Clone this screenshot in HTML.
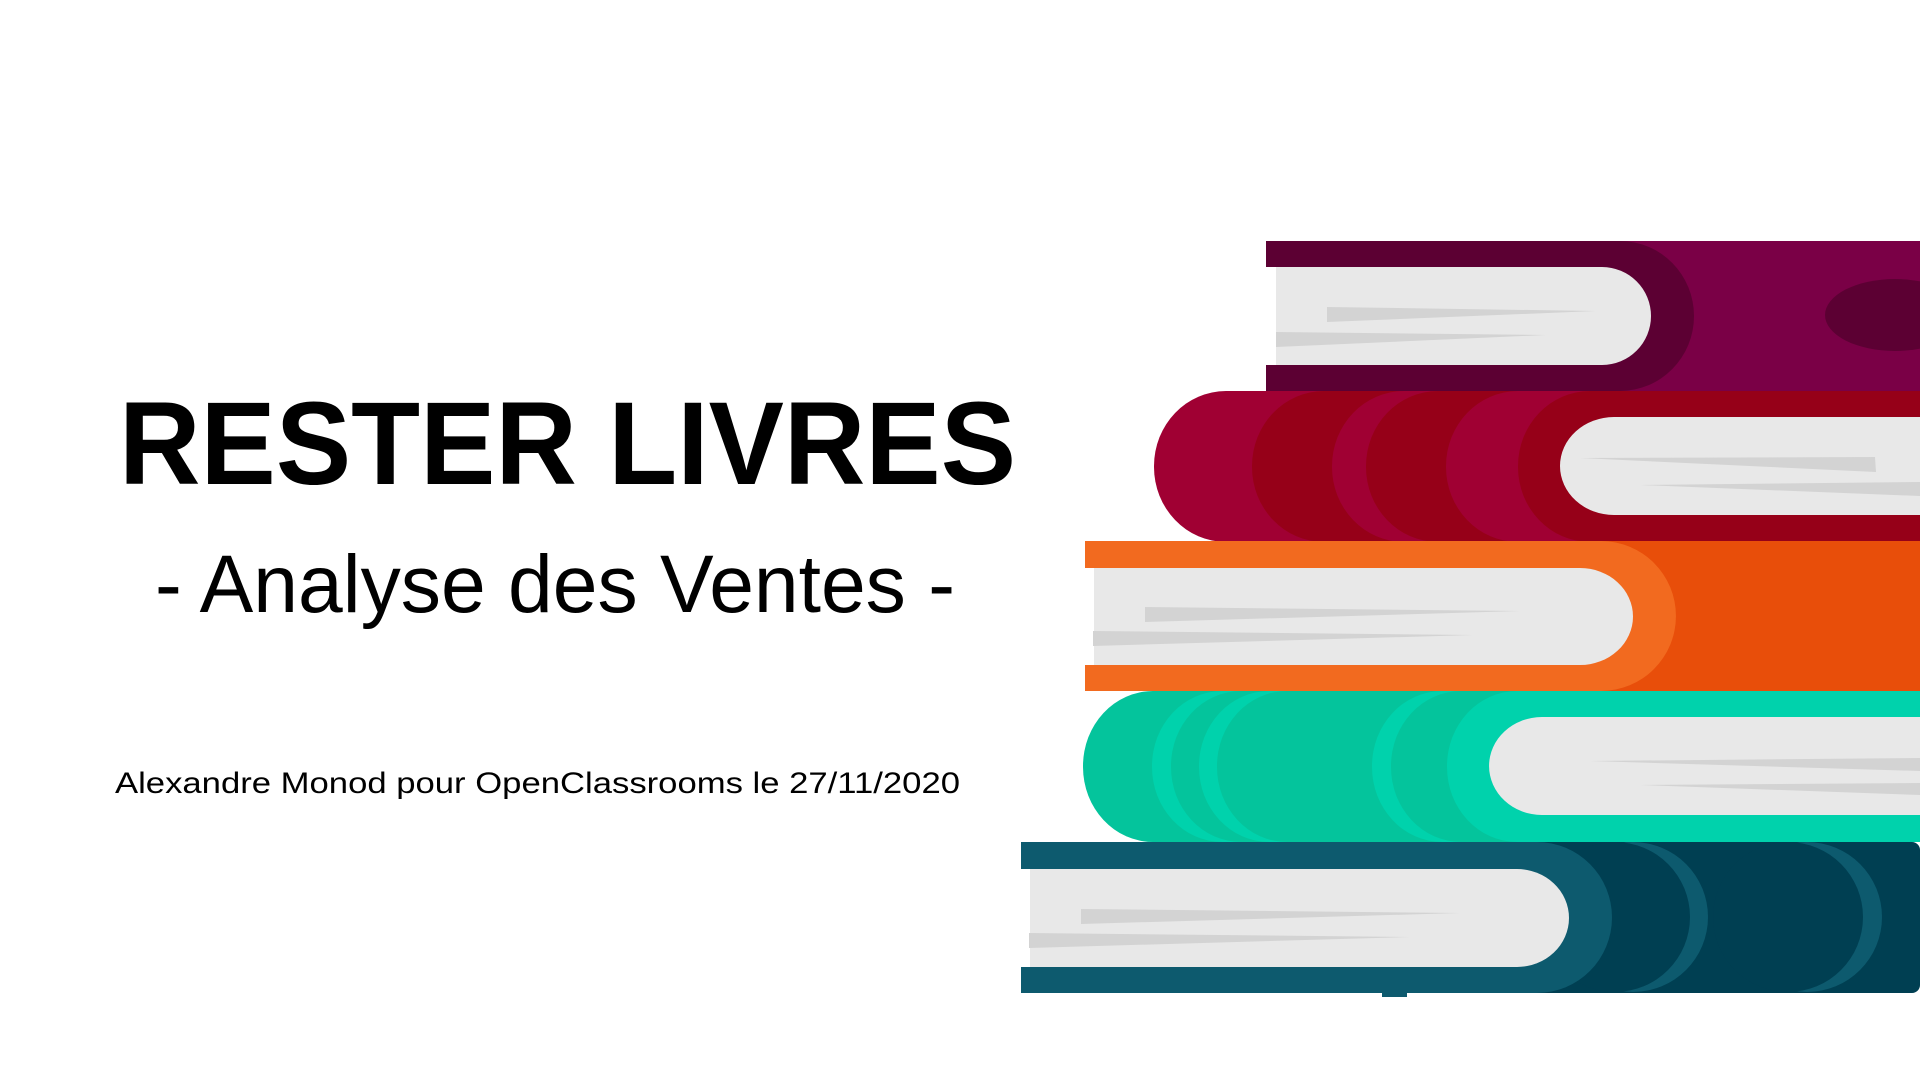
<!DOCTYPE html>
<html><head><meta charset="utf-8"><style>
html,body{margin:0;padding:0;background:#fff;width:1920px;height:1080px;overflow:hidden}
svg{display:block}
</style></head><body>
<svg width="1920" height="1080" viewBox="0 0 1920 1080" xmlns="http://www.w3.org/2000/svg">
<rect width="1920" height="1080" fill="#fff"/>
<g font-family="'Liberation Sans', Arial, sans-serif" fill="#000">
<text x="119" y="484" font-size="118" font-weight="bold" textLength="897" lengthAdjust="spacingAndGlyphs">RESTER LIVRES</text>
<text x="155" y="612" font-size="82" textLength="800" lengthAdjust="spacingAndGlyphs">- Analyse des Ventes -</text>
<text x="115" y="793" font-size="30" textLength="845" lengthAdjust="spacingAndGlyphs">Alexandre Monod pour OpenClassrooms le 27/11/2020</text>
</g>

<!-- Purple book -->
<rect x="1266" y="241" width="700" height="150" fill="#7a0046"/>
<path d="M1266 241 H1620 A74 75 0 0 1 1620 391 H1266 Z" fill="#5c0033"/>
<rect x="1266" y="267" width="12" height="98" fill="#fff"/>
<path d="M1276 267 H1602 A49 49 0 0 1 1602 365 H1276 Z" fill="#e8e8e8"/>
<polygon points="1327,307 1596,311 1327,322" fill="#d3d3d3"/>
<polygon points="1276,332 1546,335 1276,347" fill="#d3d3d3"/>
<ellipse cx="1895" cy="315" rx="70" ry="36" fill="#5c0033"/>

<!-- Red book -->
<rect x="1154" y="391" width="900" height="151" rx="72" ry="75" fill="#a00033"/>
<rect x="1252" y="391" width="800" height="151" rx="72" ry="75" fill="#960018"/>
<rect x="1332" y="391" width="700" height="151" rx="72" ry="75" fill="#a00033"/>
<rect x="1366" y="391" width="700" height="151" rx="72" ry="75" fill="#960018"/>
<rect x="1446" y="391" width="600" height="151" rx="72" ry="75" fill="#a00033"/>
<rect x="1518" y="391" width="600" height="151" rx="72" ry="75" fill="#960018"/>
<path d="M1920 417 H1614 A54 49 0 0 0 1614 515 H1920 Z" fill="#e8e8e8"/>
<polygon points="1580,458 1875,457 1876,472" fill="#d3d3d3"/>
<polygon points="1640,485 1920,482 1920,496" fill="#d3d3d3"/>

<!-- Orange book -->
<rect x="1085" y="541" width="835" height="150" fill="#e84e0a"/>
<path d="M1085 541 H1601 A75 75 0 0 1 1601 691 H1085 Z" fill="#f26a1f"/>
<rect x="1085" y="568" width="12" height="97" fill="#fff"/>
<path d="M1094 568 H1580 A53 48.5 0 0 1 1580 665 H1094 Z" fill="#e8e8e8"/>
<polygon points="1145,607 1520,611 1145,622" fill="#d3d3d3"/>
<polygon points="1093,631 1473,635 1093,646" fill="#d3d3d3"/>

<!-- Teal book -->
<rect x="1083" y="691" width="900" height="151" rx="70" ry="75" fill="#04c49c"/>
<rect x="1152" y="691" width="900" height="151" rx="70" ry="75" fill="#00d2ac"/>
<rect x="1171" y="691" width="900" height="151" rx="70" ry="75" fill="#04c49c"/>
<rect x="1199" y="691" width="900" height="151" rx="70" ry="75" fill="#00d2ac"/>
<rect x="1217" y="691" width="900" height="151" rx="70" ry="75" fill="#04c49c"/>
<rect x="1372" y="691" width="700" height="151" rx="70" ry="75" fill="#00d2ac"/>
<rect x="1391" y="691" width="700" height="151" rx="70" ry="75" fill="#04c49c"/>
<rect x="1447" y="691" width="700" height="151" rx="70" ry="75" fill="#00d2ac"/>
<path d="M1920 717 H1542 A53 49 0 0 0 1542 815 H1920 Z" fill="#e8e8e8"/>
<polygon points="1590,761 1920,758 1920,771" fill="#d3d3d3"/>
<polygon points="1640,785 1920,783 1920,795" fill="#d3d3d3"/>

<!-- Navy book -->
<rect x="1382" y="990" width="25" height="7" fill="#0d5a6e"/>
<rect x="1021" y="842" width="899" height="151" rx="8" fill="#003f52"/>
<ellipse cx="1633" cy="917" rx="75" ry="75" fill="#0d5a6e"/>
<ellipse cx="1615" cy="917" rx="75" ry="75" fill="#003f52"/>
<ellipse cx="1807" cy="917" rx="75" ry="75" fill="#0d5a6e"/>
<ellipse cx="1788" cy="917" rx="75" ry="75" fill="#003f52"/>
<path d="M1021 842 H1537 A75 75.5 0 0 1 1537 993 H1021 Z" fill="#0d5a6e"/>
<rect x="1021" y="869" width="12" height="98" fill="#fff"/>
<path d="M1030 869 H1517 A52 49 0 0 1 1517 967 H1030 Z" fill="#e8e8e8"/>
<polygon points="1081,909 1460,913 1081,924" fill="#d3d3d3"/>
<polygon points="1029,933 1410,937 1029,948" fill="#d3d3d3"/>
</svg>
</body></html>
